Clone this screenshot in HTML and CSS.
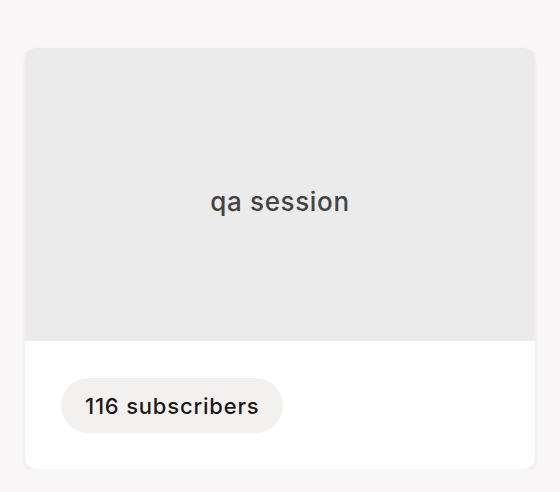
FILE: index.html
```html
<!DOCTYPE html>
<html lang="en">
<head>
    <meta charset="UTF-8">
    <meta name="viewport" content="width=device-width, initial-scale=1.0">
    <title>Channel</title>
    <link rel="stylesheet" href="styles.css">
</head>
<body>

    <div class="channel-card">
        <div class="channel-cover">
            <span class="channel-name">qa session</span>
        </div>
        <div class="channel-footer">
            <span class="subscriber-pill">116 subscribers</span>
        </div>
    </div>

</body>
</html>
```

FILE: styles.css
```css
body {
    font-family: 'Inter', 'Noto Sans', sans-serif;
    background-color: #F8F6F6;
    margin: 0;
    padding: 48px 25px 0 25px;
}

.channel-card {
    background: #FFFFFF;
    border-radius: 10px;
    overflow: hidden;
    box-shadow: 0px 2px 4px rgba(0, 0, 0, 0.08);
}

.channel-cover {
    background-color: #EBEBEB;
    height: 293px;
    display: flex;
    justify-content: center;
    align-items: center;
}

.channel-name {
    font-size: 26px;
    color: #444444;
    font-weight: 500;
    letter-spacing: 0.65px;
    margin-top: 14px;
}

.channel-footer {
    padding: 37px 36px 36px 36px;
    display: flex;
}

.subscriber-pill {
    background-color: #F3F1F0;
    color: #1E1A1A;
    font-size: 22px;
    font-weight: 500;
    letter-spacing: 0.8px;
    border-radius: 28px;
    height: 55px;
    padding: 0 24px;
    display: flex;
    align-items: center;
}
```
